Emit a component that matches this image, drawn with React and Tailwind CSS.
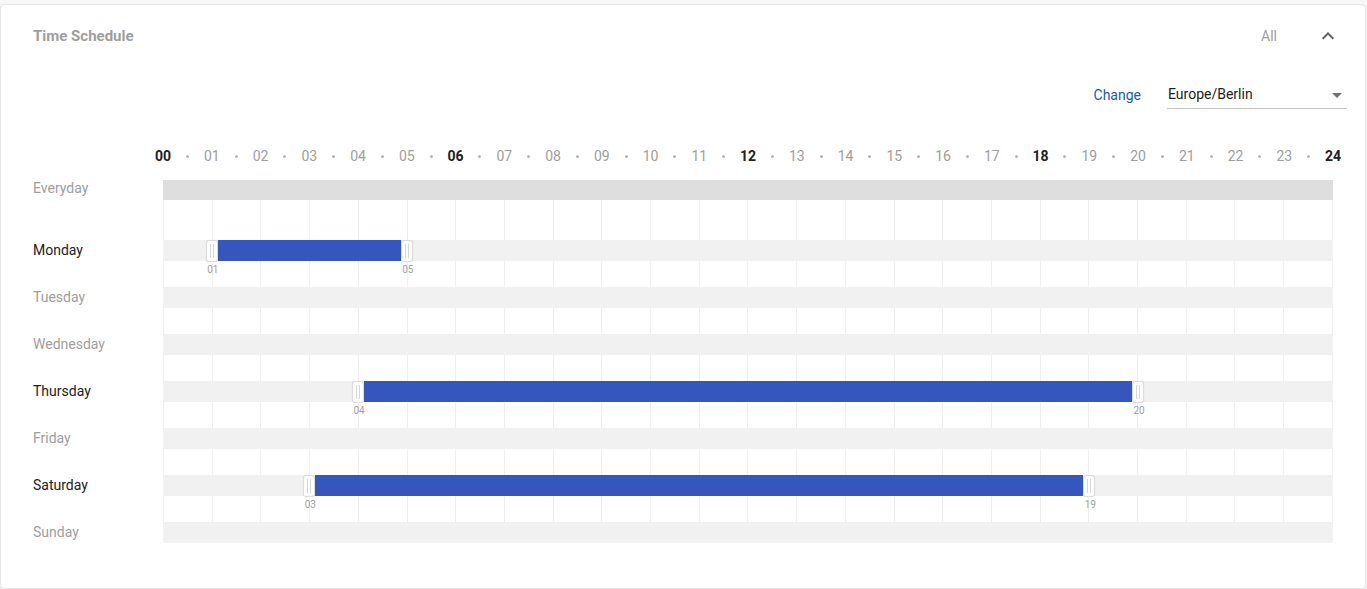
const HOURS = Array.from({ length: 25 }, (_, i) => i);
const BOLD = [0, 6, 12, 18, 24];
const H = 48.75;

const days = [
  { name: 'Monday', range: [1, 5] },
  { name: 'Tuesday' },
  { name: 'Wednesday' },
  { name: 'Thursday', range: [4, 20] },
  { name: 'Friday' },
  { name: 'Saturday', range: [3, 19] },
  { name: 'Sunday' },
];

const pad = (n) => String(n).padStart(2, '0');

const Handle = () => (
  <div className="w-[12px] h-[22px] -my-[1px] bg-white border border-[#dcdcdc] rounded-[3px] flex items-center justify-center gap-[2px] shadow-[0_0_1px_rgba(0,0,0,0.15)] shrink-0">
    <span className="w-px h-[14px] bg-[#d6d6d6]" />
    <span className="w-px h-[14px] bg-[#d6d6d6]" />
  </div>
);

const Cells = ({ children, h = 'h-[26px]' }) => (
  <div className={`relative flex ${h} border-l border-r border-[#efefef]`}>
    {HOURS.slice(0, 24).map((i) => (
      <div key={i} className={`flex-1 ${i < 23 ? 'border-r border-[#efefef]' : ''}`} />
    ))}
    {children}
  </div>
);

const DayRow = ({ day, last }) => {
  const active = !!day.range;
  return (
    <div className="flex">
      <div className="w-[130px] shrink-0">
        <div className={`h-[21px] flex items-center text-[14px] ${active ? 'text-[#212121]' : 'text-[#9e9e9e]'}`}>
          {day.name}
        </div>
      </div>
      <div className="w-[1170px]">
        <div className="h-[21px] bg-[#f1f1f1] flex items-center">
          {active && (
            <>
              <div className="shrink-0" style={{ width: day.range[0] * H - 6 }} />
              <Handle />
              <div className="h-[21px] bg-[#3557bd] shrink-0" style={{ width: (day.range[1] - day.range[0]) * H - 12 }} />
              <Handle />
            </>
          )}
        </div>
        {!last && (
          <Cells>
            {active &&
              day.range.map((h) => (
                <span
                  key={h}
                  className="absolute top-[3px] w-[20px] -ml-[10px] text-center text-[10px] leading-[12px] text-[#9e9e9e]"
                  style={{ left: h * H }}
                >
                  {pad(h)}
                </span>
              ))}
          </Cells>
        )}
      </div>
    </div>
  );
};

export default function App() {
  return (
    <div className="min-h-[589px] bg-[#f7f7f7] pt-[4px] font-['Roboto','Liberation_Sans',sans-serif]">
      <div className="w-[1366px] h-[585px] bg-white border border-[#e6e6e6] rounded-[4px] shadow-[0_1px_2px_rgba(0,0,0,0.06)]">
        {/* Header */}
        <div className="h-[62px] flex items-center pl-[32px] pr-[25px]">
          <span className="text-[15px] font-bold text-[#9e9e9e]">Time Schedule</span>
          <span className="ml-auto text-[14px] text-[#9e9e9e]">All</span>
          <svg className="ml-[39px]" width="24" height="24" viewBox="0 0 24 24" fill="#616161">
            <path d="M12 8l-6 6 1.41 1.41L12 10.83l4.59 4.58L18 14z" />
          </svg>
        </div>

        {/* Timezone */}
        <div className="flex items-center justify-end pr-[18px] h-[40px] mt-[8px]">
          <span className="text-[14px] text-[#1a56c6]">Change</span>
          <div className="ml-[26px] w-[180px] h-[28px] border-b border-[#c4c4c4] flex items-center justify-between">
            <span className="pl-[1px] text-[14px] text-[#212121]">Europe/Berlin</span>
            <svg width="24" height="24" viewBox="0 0 24 24" fill="#707070" className="-mr-[2px]">
              <path d="M7 10l5 5 5-5z" />
            </svg>
          </div>
        </div>

        {/* Body */}
        <div className="pl-[32px] pt-[28px]">
          {/* Hour scale */}
          <div className="flex h-[26px] items-center">
            <div className="w-[130px] shrink-0" />
            <div className="ml-[-12.1875px] grid grid-cols-[repeat(49,24.375px)] items-center">
              {HOURS.map((h) => (
                <div key={h} className="contents">
                  <span
                    className={`text-center text-[14px] ${BOLD.includes(h) ? 'font-bold text-[#212121]' : 'text-[#9e9e9e]'}`}
                  >
                    {pad(h)}
                  </span>
                  {h < 24 && (
                    <span className="flex justify-center">
                      <span className="w-[3px] h-[3px] rounded-full bg-[#b5b5b5]" />
                    </span>
                  )}
                </div>
              ))}
            </div>
          </div>

          {/* Everyday */}
          <div className="flex mt-[11px]">
            <div className="w-[130px] shrink-0 h-[20px] flex items-center text-[14px] text-[#9e9e9e] -mt-[2px]">
              Everyday
            </div>
            <div className="w-[1170px]">
              <div className="h-[20px] bg-[#dedede]" />
              <Cells h="h-[40px]" />
            </div>
          </div>

          {days.map((d, i) => (
            <DayRow key={d.name} day={d} last={i === days.length - 1} />
          ))}
        </div>
      </div>
    </div>
  );
}
